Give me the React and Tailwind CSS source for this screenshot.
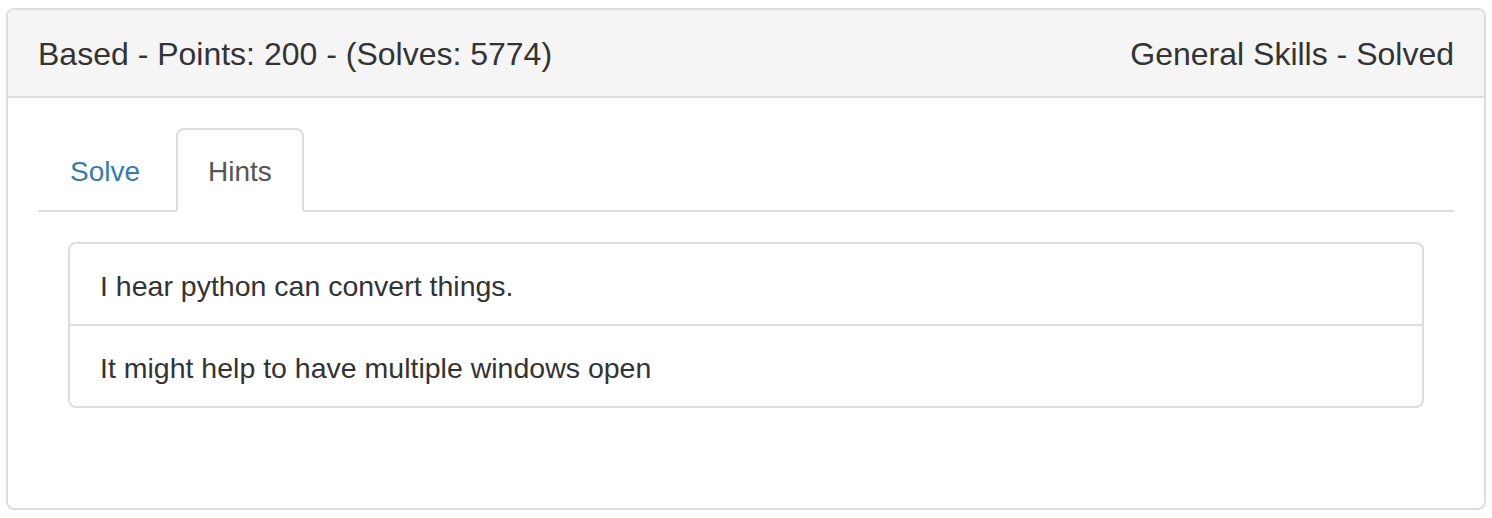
export default function App() {
  const hints = [
    "I hear python can convert things.",
    "It might help to have multiple windows open",
  ];

  return (
    <div className="min-h-[518px] bg-white px-[6px] pt-[8px] font-['Liberation_Sans',Arial,sans-serif] text-[#333]">
      <div className="border-2 border-[#ddd] rounded-[8px] bg-white overflow-hidden">
        {/* Heading */}
        <div className="h-[88px] bg-[#f5f5f5] border-b-2 border-[#ddd] px-[30px] pt-[2px] flex items-center justify-between text-[32px] leading-[36px]">
          <span>Based - Points: 200 - (Solves: 5774)</span>
          <span>General Skills - Solved</span>
        </div>

        {/* Body */}
        <div className="px-[30px] pt-[30px] pb-[100px]">
          <ul className="flex border-b-2 border-[#ddd] text-[28px] leading-[40px]">
            <li className="mr-[4px] -mb-[2px]">
              <a className="block px-[30px] pt-[22px] pb-[18px] border-2 border-transparent text-[#337ab7] cursor-pointer">
                Solve
              </a>
            </li>
            <li className="-mb-[2px]">
              <a className="block px-[30px] pt-[22px] pb-[18px] border-2 border-[#ddd] border-b-white rounded-t-[8px] bg-white text-[#555]">
                Hints
              </a>
            </li>
          </ul>

          <div className="px-[30px] pt-[30px]">
            <div className="border-2 border-[#ddd] rounded-[8px] text-[28.5px] leading-[40px]">
              {hints.map((h, i) => (
                <div
                  key={i}
                  className={
                    "px-[30px] pt-[22px] pb-[18px]" +
                    (i > 0 ? " border-t-2 border-[#ddd]" : "")
                  }
                >
                  {h}
                </div>
              ))}
            </div>
          </div>
        </div>
      </div>
    </div>
  );
}
